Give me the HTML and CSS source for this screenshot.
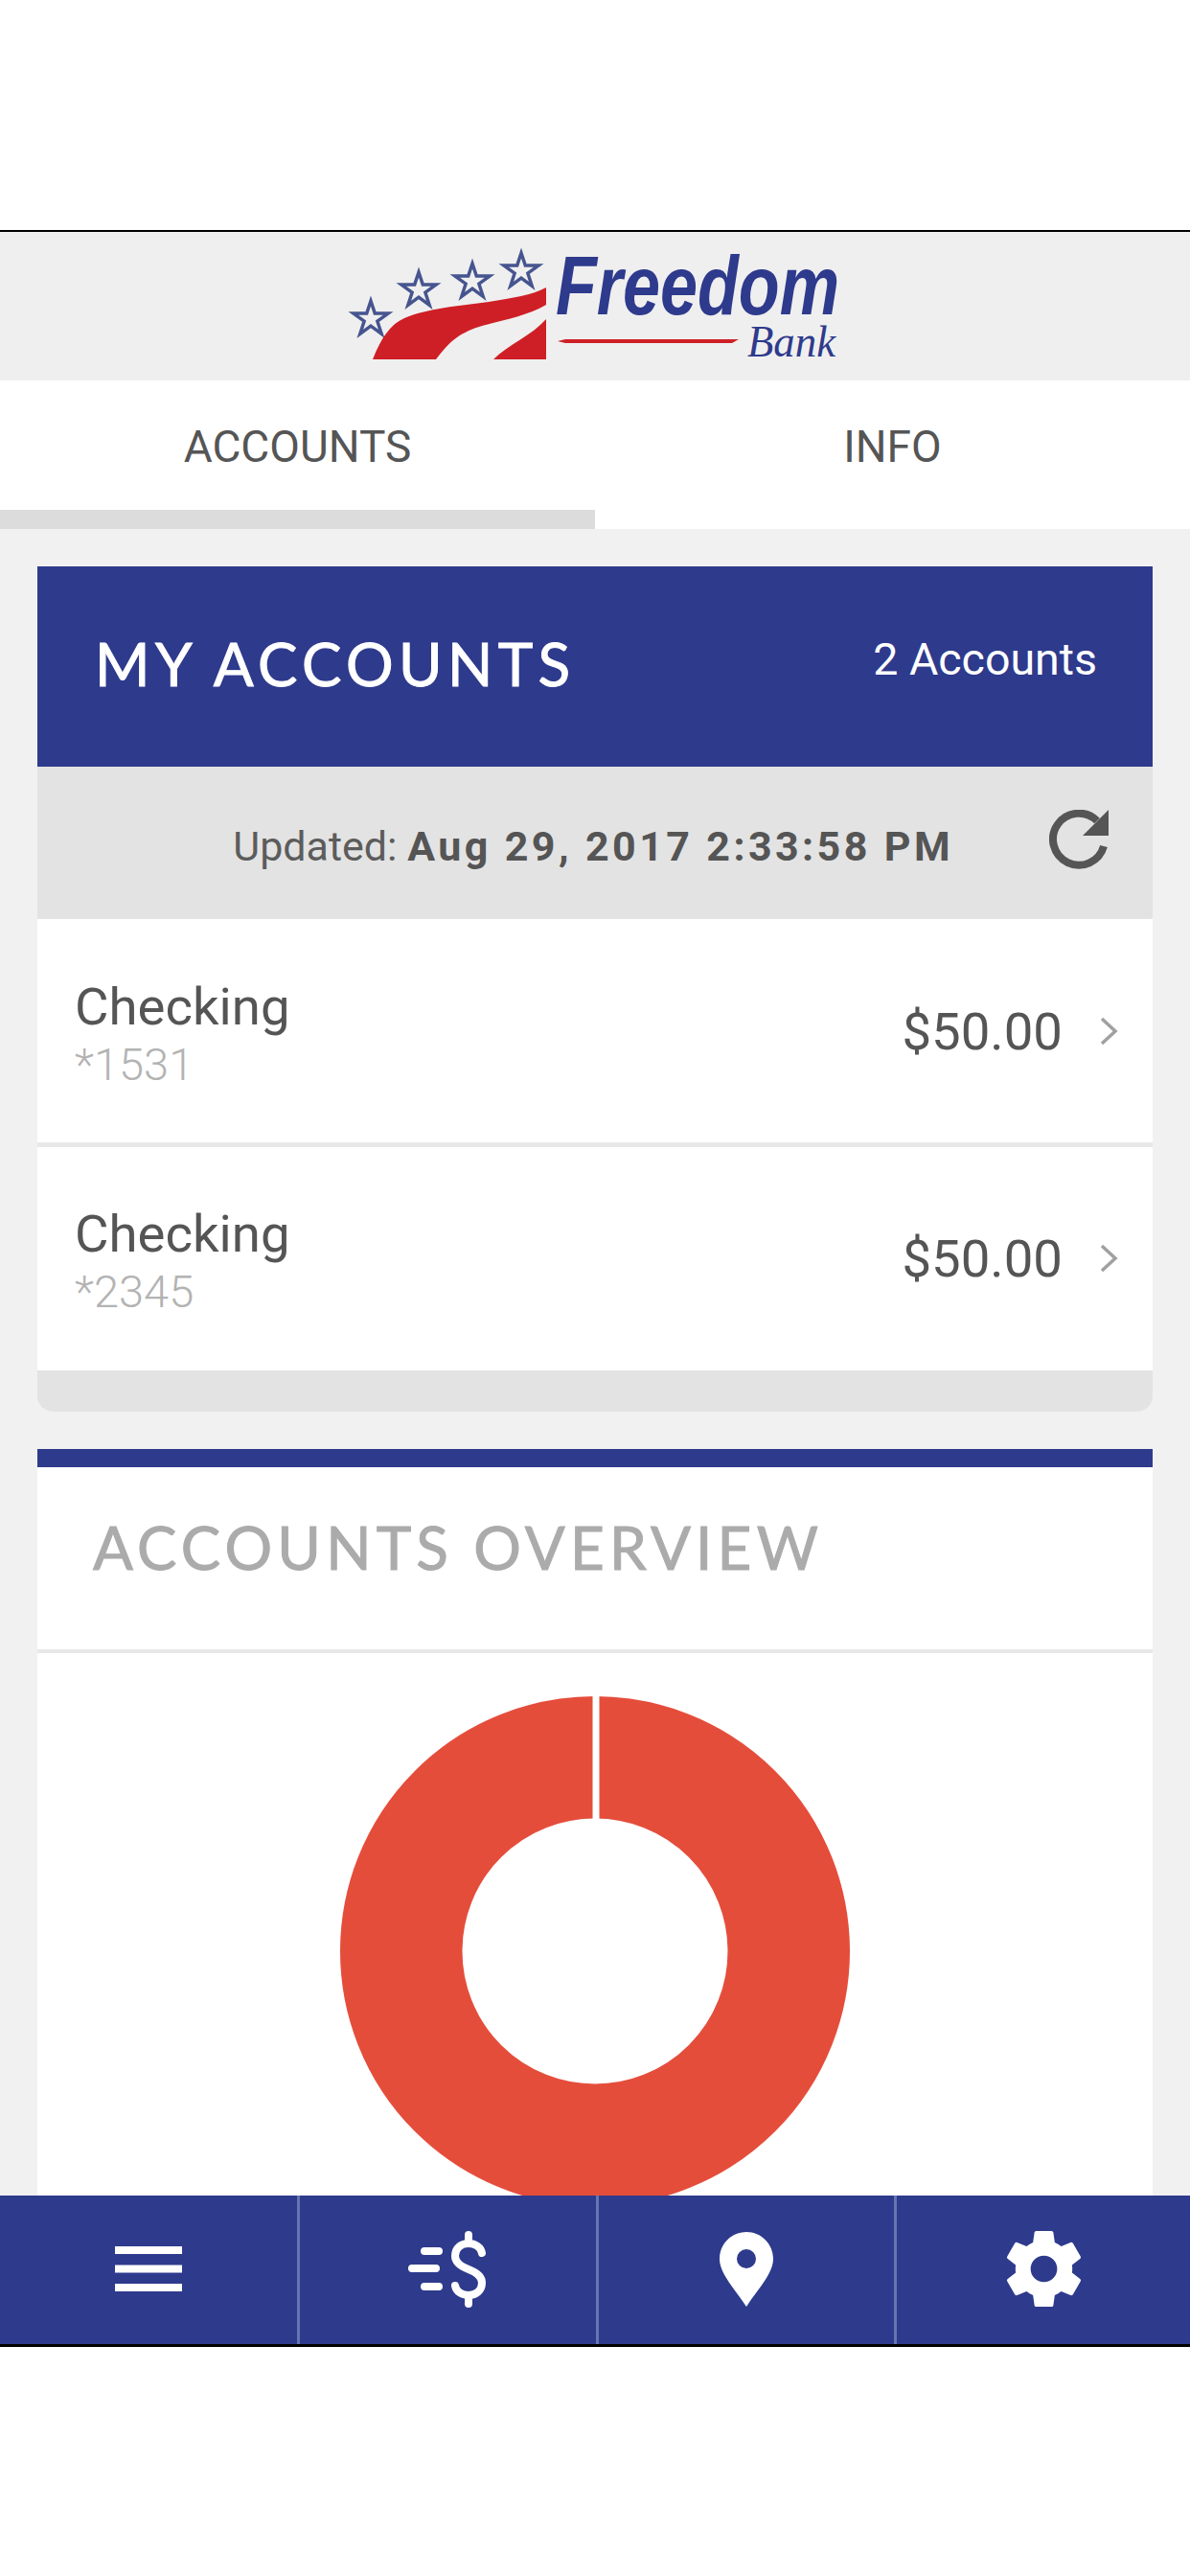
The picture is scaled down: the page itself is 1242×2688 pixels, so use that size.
FILE: index.html
```html
<!DOCTYPE html>
<html lang="en">
<head>
<meta charset="utf-8">
<title>Freedom Bank</title>
<link rel="stylesheet" href="styles.css">
</head>
<body>
<div class="screen">
  <header class="brand">
    <svg class="logo" width="680" height="155" viewBox="0 0 680 155" aria-label="Freedom Bank">
      <g class="stars" transform="translate(-281 -242)">
        <path d="M387 314l4.300 13.100 13.800 0-11.200 8.100 4.300 13.100-11.200-8.100-11.200 8.100 4.300-13.100-11.200-8.100 13.800 0z"/>
        <path d="M437 284l4.300 13.100 13.800 0-11.200 8.100 4.300 13.100-11.200-8.100-11.200 8.100 4.300-13.100-11.200-8.100 13.800 0z"/>
        <path d="M493 275l4.300 13.100 13.800 0-11.200 8.100 4.300 13.100-11.200-8.100-11.200 8.100 4.300-13.100-11.200-8.100 13.800 0z"/>
        <path d="M544 264l4.300 13.100 13.800 0-11.200 8.100 4.300 13.100-11.200-8.100-11.200 8.100 4.300-13.100-11.200-8.100 13.800 0z"/>
      </g>
      <g class="swoosh" transform="translate(-281 -242)">
        <path d="M389 375C398 352 408 338 422 332C445 322 480 319 510 315C535 311 555 308 570 300V318C550 330 520 335 500 341C478 348 468 358 455 375z"/>
        <path d="M515 375C530 360 555 350 570 333V375z"/>
        <path d="M582 356L590 354H771L764 358H590z"/>
      </g>
      <text class="freedom" x="299" y="86" textLength="296" lengthAdjust="spacingAndGlyphs">Freedom</text>
      <text class="bank" x="499" y="130" textLength="92" lengthAdjust="spacingAndGlyphs">Bank</text>
    </svg>
  </header>

  <nav class="tabs">
    <div class="tab tab-active">ACCOUNTS</div>
    <div class="tab">INFO</div>
  </nav>

  <main class="content">
    <section class="card accounts">
      <div class="card-head">
        <h1>MY ACCOUNTS</h1>
        <span class="count">2 Accounts</span>
      </div>
      <div class="updated">
        <span class="updated-text">Updated: <b>Aug 29, 2017 2:33:58 PM</b></span>
        <svg class="refresh" width="62" height="62" viewBox="0 0 62 62"><path class="refresh-arc" d="M50 11.500A27 27 0 1 0 57 38"/><path class="refresh-head" d="M62 0V27H35z"/></svg>
      </div>
      <div class="row">
        <div class="row-name"><span class="name">Checking</span><span class="num">*1531</span></div>
        <div class="row-amt"><span class="amount">$50.00</span>
          <svg class="chev" width="20" height="32" viewBox="0 0 20 32"><path d="M3 3l14 13L3 29"/></svg></div>
      </div>
      <div class="row">
        <div class="row-name"><span class="name">Checking</span><span class="num">*2345</span></div>
        <div class="row-amt"><span class="amount">$50.00</span>
          <svg class="chev" width="20" height="32" viewBox="0 0 20 32"><path d="M3 3l14 13L3 29"/></svg></div>
      </div>
      <div class="card-foot"></div>
    </section>

    <section class="card overview">
      <h2>ACCOUNTS OVERVIEW</h2>
      <div class="chart">
        <svg width="532" height="532" viewBox="0 0 532 532">
          <circle class="ring" cx="266" cy="266" r="202.250"/>
          <rect class="gap" x="263.500" y="0" width="7" height="128"/>
        </svg>
      </div>
    </section>
  </main>

  <footer class="bottom">
    <div class="nav-item">
      <svg width="70" height="47" viewBox="0 0 70 47"><path d="M0 0h70v8H0zM0 19.500h70v8H0zM0 39h70v8H0z"/></svg>
    </div>
    <div class="nav-item">
      <svg class="line-icon" width="84" height="82" viewBox="0 0 84 82"><path d="M18 22H33M5 40H30M18 59H33M78 24c-1-6-7-10-14-10-8 0-14 5-14 13 0 7 6 11 14 14 8 3 14 7 14 14 0 8-6 13-14 13-7 0-13-4-14-10M64 5v9M64 68v9"/></svg>
    </div>
    <div class="nav-item">
      <svg width="56" height="78" viewBox="0 0 56 78"><path fill-rule="evenodd" d="M28 0C12.500 0 0 12.500 0 28c0 7 3 13 7 20 6 10 15 20 21 30 6-10 15-20 21-30 4-7 7-13 7-20C56 12.500 43.500 0 28 0zm0 18a10 10 0 1 1 0 20 10 10 0 0 1 0-20z"/></svg>
    </div>
    <div class="nav-item">
      <svg width="95" height="95" viewBox="0 0 24 24"><path d="M19.430 12.980c.04-.32.070-.64.070-.98s-.03-.66-.07-.98l2.110-1.650c.19-.15.24-.42.120-.64l-2-3.460c-.12-.22-.39-.3-.61-.22l-2.490 1c-.52-.4-1.080-.73-1.690-.98l-.38-2.650A.49.49 0 0 0 14 2h-4c-.25 0-.46.18-.49.420l-.38 2.650c-.61.25-1.170.59-1.690.98l-2.490-1c-.23-.09-.49 0-.61.220l-2 3.460c-.13.220-.07.490.12.640l2.110 1.650c-.04.320-.07.650-.07.980s.03.660.07.980l-2.110 1.650c-.19.150-.24.420-.12.640l2 3.460c.12.220.39.300.61.220l2.490-1c.52.400 1.080.730 1.690.980l.38 2.650c.03.240.24.420.49.420h4c.25 0 .46-.18.49-.42l.38-2.650c.61-.25 1.170-.59 1.690-.98l2.490 1c.23.090.49 0 .61-.22l2-3.460c.12-.22.070-.49-.12-.64l-2.110-1.650zM12 15.500a3.500 3.500 0 1 1 0-7 3.500 3.500 0 0 1 0 7z"/></svg>
    </div>
  </footer>
</div>
</body>
</html>
```
FILE: styles.css
```css
* { box-sizing: border-box; }
html, body { margin: 0; padding: 0; background: #fff; }
.screen {
  width: 1242px;
  height: 2688px;
  padding: 240px 0 239px;
  background: #fff;
  display: flex;
  flex-direction: column;
  font-family: Roboto, "Liberation Sans", sans-serif;
  color: #555;
}
.brand {
  height: 157px;
  flex: none;
  background: #efefef;
  border-top: 2px solid #000;
  display: flex;
  justify-content: center;
}
.logo { display: block; }
.stars path { fill: none; stroke: #46558f; stroke-width: 3.500; }
.swoosh path { fill: #cf1f26; }
.freedom { font: italic bold 88px "Liberation Sans", sans-serif; fill: #2e3a8c; }
.bank { font: italic 46px "Liberation Serif", serif; fill: #2e3a8c; }

.tabs { height: 155px; flex: none; display: flex; background: #fff; }
.tab {
  flex: 1;
  display: flex;
  align-items: center;
  justify-content: center;
  padding-top: 3px;
  font-size: 46px;
  color: #555;
  border-bottom: 20px solid transparent;
}
.tab-active { border-bottom-color: #dcdcdc; }

.content {
  flex: 1;
  min-height: 0;
  overflow: hidden;
  background: #f1f1f1;
  padding: 39px 39px 0;
  display: flex;
  flex-direction: column;
  gap: 39px;
}
.card { flex: none; background: #fff; }
.card-head {
  height: 209px;
  background: #2e3a8c;
  color: #fff;
  display: flex;
  align-items: center;
  justify-content: space-between;
  padding: 0 58px 7px 60px;
}
.card-head h1 {
  margin: 0;
  font: 400 62px Lato, sans-serif;
  letter-spacing: 5.400px;
  -webkit-text-stroke: 1px #fff;
}
.count { font-size: 46.500px; margin-top: -8px; }
.updated {
  height: 159px;
  background: #e3e3e3;
  display: flex;
  align-items: center;
  justify-content: flex-end;
  padding: 0 46px 0 0;
  gap: 100px;
}
.updated-text { font-size: 43px; margin-top: 6px; color: #5c5c5c; }
.updated-text b { letter-spacing: 3.400px; font-weight: 700; color: #555; }
.refresh { margin-bottom: 7px; }
.refresh-arc { fill: none; stroke: #555; stroke-width: 8; }
.refresh-head { fill: #555; }
.row {
  height: 238px;
  display: flex;
  align-items: center;
  justify-content: space-between;
  padding: 0 36px 0 39px;
  border-bottom: 5px solid #e8e8e8;
}
.row + .row { border-bottom: 0; height: 233px; padding-bottom: 2px; }
.row-name { display: flex; flex-direction: column; }
.name { font-size: 54.500px; line-height: 70px; color: #555; }
.num { font-size: 47px; line-height: 52px; color: #b3b3b3; font-weight: 300; }
.row-amt { display: flex; align-items: center; gap: 38px; }
.amount { font-size: 54.500px; color: #555; }
.chev path { fill: none; stroke: #a0a0a0; stroke-width: 3.500; }
.card-foot {
  height: 43px;
  background: #e3e3e3;
  border-radius: 0 0 16px 16px;
}
.accounts { background: #fff; border-radius: 0 0 16px 16px; }
.overview { border-top: 19px solid #2e3a8c; }
.overview h2 {
  margin: 0;
  height: 194px;
  padding: 0 0 24px 58px;
  display: flex;
  align-items: center;
  font: 400 62px Lato, sans-serif;
  letter-spacing: 5.200px;
  -webkit-text-stroke: 1px #ababab;
  color: #ababab;
  border-bottom: 4px solid #e8e8e8;
}
.chart { display: flex; justify-content: center; padding-top: 45px; padding-right: 1px; }
.ring { fill: none; stroke: #e54d3b; stroke-width: 127.500; }
.gap { fill: #fff; }

.bottom {
  height: 158px;
  flex: none;
  background: #2e3a8c;
  border-bottom: 3px solid #000;
  display: flex;
}
.nav-item {
  flex: 0 0 311.500px;
  display: flex;
  align-items: center;
  justify-content: center;
  padding-bottom: 2px;
  border-right: 3px solid #6674b0;
}
.nav-item:first-child { flex-basis: 313px; }
.nav-item:last-child { flex: 1; border-right: 0; }
.nav-item svg { fill: #fff; }
.nav-item .line-icon { fill: none; stroke: #fff; stroke-width: 8; stroke-linecap: round; }
```
